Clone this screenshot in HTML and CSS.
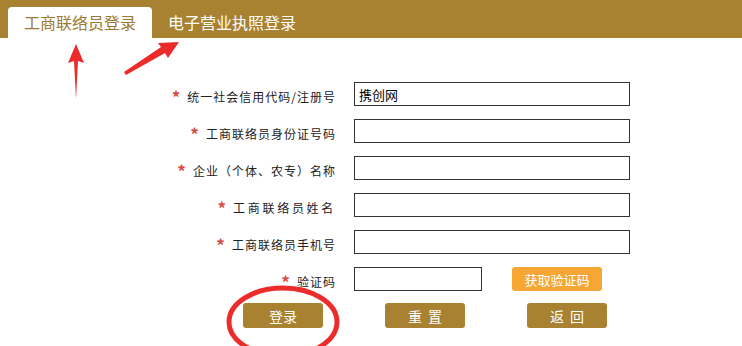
FILE: index.html
```html
<!DOCTYPE html>
<html lang="zh-CN">
<head>
    <meta charset="UTF-8">
    <meta name="viewport" content="width=device-width, initial-scale=1.0">
    <title>工商联络员登录</title>
    <link rel="stylesheet" href="styles.css">
</head>
<body>
    <div class="page">
        <div class="tab-bar">
            <div class="tab active">工商联络员登录</div>
            <div class="tab">电子营业执照登录</div>
        </div>
        <form class="login-form">
            <div class="form-row">
                <label class="form-label"><span class="star">*</span>统一社会信用代码/注册号</label>
                <input type="text" class="form-input" value="携创网">
            </div>
            <div class="form-row">
                <label class="form-label"><span class="star">*</span>工商联络员身份证号码</label>
                <input type="text" class="form-input">
            </div>
            <div class="form-row">
                <label class="form-label"><span class="star">*</span>企业（个体、农专）名称</label>
                <input type="text" class="form-input">
            </div>
            <div class="form-row">
                <label class="form-label wide"><span class="star">*</span>工商联络员姓名</label>
                <input type="text" class="form-input">
            </div>
            <div class="form-row">
                <label class="form-label"><span class="star">*</span>工商联络员手机号</label>
                <input type="text" class="form-input">
            </div>
            <div class="form-row">
                <label class="form-label"><span class="star">*</span>验证码</label>
                <input type="text" class="form-input short">
                <button type="button" class="code-btn">获取验证码</button>
            </div>
            <div class="btn-row">
                <button type="button" class="action-btn">登录</button>
                <button type="button" class="action-btn spaced">重 置</button>
                <button type="button" class="action-btn spaced">返 回</button>
            </div>
        </form>
        <svg class="marks" width="742" height="346" viewBox="0 0 742 346">
            <g fill="#ec2b2b">
                <polygon points="76,44 84,63 78,61 76,99 74,61 68,63"/>
                <polygon points="179,42 168,58 165,53 126,75 124,72 161,47 158,43"/>
            </g>
            <ellipse cx="283" cy="322" rx="54" ry="34" fill="none" stroke="#ec2b2b" stroke-width="5"/>
        </svg>
    </div>
</body>
</html>
```

FILE: styles.css
```css
body {
    margin: 0;
    background-color: #fff;
    font-family: "Noto Sans CJK SC", "Noto Sans", sans-serif;
    color: #222;
}
.page {
    position: relative;
    width: 742px;
    height: 346px;
    overflow: hidden;
}
.tab-bar {
    display: flex;
    height: 38px;
    padding: 7px 0 0 8px;
    box-sizing: border-box;
    background-color: #a88131;
}
.tab {
    height: 31px;
    line-height: 30px;
    font-size: 16px;
    color: #fff;
    padding-left: 16px;
}
.tab.active {
    width: 144px;
    padding-left: 0;
    text-align: center;
    background-color: #fff;
    color: #9c7a32;
    border-radius: 4px 4px 0 0;
}
.login-form {
    display: flex;
    flex-direction: column;
    gap: 13px;
    padding-top: 44px;
}
.form-row {
    display: flex;
    align-items: center;
    height: 24px;
}
.form-label {
    width: 336px;
    text-align: right;
    font-size: 12px;
    letter-spacing: 1px;
    margin-right: 18px;
}
.form-label.wide {
    letter-spacing: 2.7px;
}
.star {
    color: #dd4a45;
    font-size: 17px;
    font-weight: bold;
    letter-spacing: 0;
    margin-right: 7px;
    position: relative;
    top: 2px;
}
.form-input {
    width: 276px;
    height: 24px;
    box-sizing: border-box;
    border: 1px solid #333;
    padding: 0 4px;
    font-size: 13px;
    font-family: "Noto Sans CJK SC", sans-serif;
    color: #000;
    outline: none;
}
.form-input.short {
    width: 128px;
}
.code-btn {
    margin-left: 30px;
    width: 90px;
    height: 24px;
    border: none;
    border-radius: 3px;
    background-color: #f6a632;
    color: #fff;
    font-size: 13px;
    font-family: "Noto Sans CJK SC", sans-serif;
    padding: 0;
}
.btn-row {
    display: flex;
    gap: 62px;
    padding-left: 243px;
    margin-top: -1px;
}
.action-btn {
    width: 80px;
    height: 25px;
    border: none;
    border-radius: 3px;
    background-color: #a88131;
    color: #fff;
    font-size: 14px;
    font-family: "Noto Sans CJK SC", sans-serif;
    padding: 0;
}
.action-btn.spaced {
    word-spacing: 3px;
}
.marks {
    position: absolute;
    left: 0;
    top: 0;
    pointer-events: none;
}
```
